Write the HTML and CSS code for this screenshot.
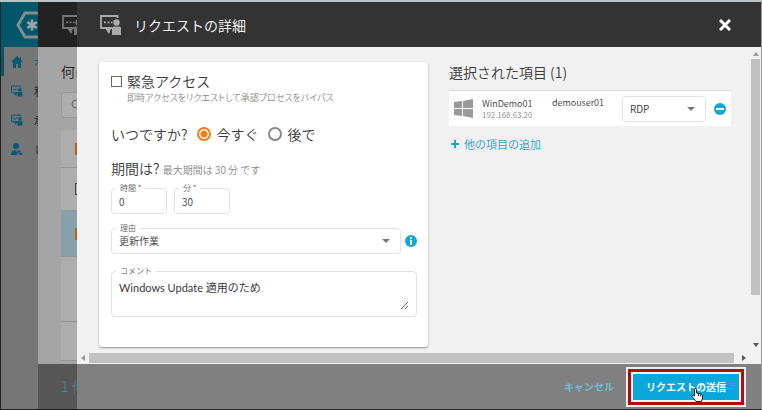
FILE: index.html
```html
<!DOCTYPE html>
<html lang="ja">
	<head>
		<meta charset="utf-8">
		<title>リクエストの詳細</title>
		<link rel="stylesheet" href="styles.css">
	</head>
	<body>
		<!-- アイコン -->
		<svg class="sprite" aria-hidden="true">
			<symbol id="i-request" viewBox="0 0 22 20">
				<path d="M17.500 3V1H1v12h11" fill="none" stroke="currentColor" stroke-width="1.800"/>
				<path d="M5 13h6l-1.500 5.500H8.500z"/>
				<path d="M4 6.500h2v1.800H4zM7.500 6.500h2v1.800h-2zM11 6.500h1.500v1.800H11z"/>
				<circle cx="16.500" cy="7.500" r="3.200"/>
				<path d="M12 13q0-1.500 1.500-1.500h6q1.500 0 1.500 1.500v7h-9z"/>
			</symbol>
			<symbol id="i-approve" viewBox="0 0 22 20">
				<path d="M17.500 3V1H1v12h11M4.500 6l3 3 5-5" fill="none" stroke="currentColor" stroke-width="1.800"/>
				<path d="M5 13h6l-1.500 5.500H8.500z"/>
				<circle cx="16.500" cy="7.500" r="3.200"/>
				<path d="M12 13q0-1.500 1.500-1.500h6q1.500 0 1.500 1.500v7h-9z"/>
			</symbol>
			<symbol id="i-arrow" viewBox="0 0 8 4"><path d="M0 0h8L4 4z"/></symbol>
		</svg>

		<div class="app">
			<!-- サイドバー -->
			<nav class="side">
				<div class="side-logo">
					<svg class="logo" viewBox="0 0 32 28">
						<path d="M9 2h14l7 12-7 12H9L2 14z" fill="none" stroke="#7f8d91" stroke-width="3"/>
						<path d="M16 8.500v11M11.200 11.200l9.600 5.600M20.800 11.200l-9.600 5.600" stroke="#9ba5a8" stroke-width="2.500"/>
					</svg>
				</div>
				<a class="side-item active" href="#">
					<svg viewBox="0 0 12 12"><path d="M6 0 0 6h2v6h3V8h2v4h3V6h2l-2-2V1H9v2z"/></svg>ホ
				</a>
				<a class="side-item" href="#"><svg><use href="#i-request"/></svg>私</a>
				<a class="side-item" href="#"><svg><use href="#i-approve"/></svg>承</a>
				<a class="side-item" href="#">
					<svg viewBox="0 0 12 12"><circle cx="5" cy="3" r="3"/><path d="M0 12q0-5 4-5l2 2 1-2q2 0 3 2-4 0-4 3zM7 11q2-3 5 0-3 2-5 0z"/></svg>レ
				</a>
			</nav>

			<!-- 後ろのパネル -->
			<section class="back">
				<header class="back-head"><svg class="head-icon"><use href="#i-request"/></svg></header>
				<div class="back-body">
					<h2>何に</h2>
					<div class="search">
						<svg viewBox="0 0 12 12"><circle cx="5" cy="5" r="4"/><path d="m8 8 4 4"/></svg>
					</div>
					<ul class="back-list">
						<li class="row-first"><span class="tick on"></span></li>
						<li class="row-second"><span class="tick"></span></li>
						<li class="row-on"><span class="tick on"></span></li>
						<li class="row-tall"></li>
						<li class="row-last"></li>
					</ul>
				</div>
				<footer class="back-foot">1 件</footer>
			</section>

			<!-- リクエストの詳細 -->
			<main class="dialog">
				<header class="dialog-head">
					<svg class="head-icon"><use href="#i-request"/></svg>
					<h1>リクエストの詳細</h1>
					<button class="close" type="button" aria-label="閉じる">
						<svg viewBox="0 0 12 12"><path d="m1 1 10 10M11 1 1 11"/></svg>
					</button>
				</header>

				<div class="scroll">
					<div class="content">
						<form class="card" id="request">
							<div class="emergency">
								<input type="checkbox" id="emergency">
								<label for="emergency">緊急アクセス</label>
								<p>即時アクセスをリクエストして承認プロセスをバイパス</p>
							</div>
							<div class="when">
								<span>いつですか?</span>
								<input type="radio" name="when" id="now" checked><label for="now">今すぐ</label>
								<input type="radio" name="when" id="later"><label for="later">後で</label>
							</div>
							<div class="period">期間は? <small>最大期間は 30 分 です</small></div>
							<div class="line times">
								<div class="field time"><label for="hour">時間 *</label><input type="text" id="hour" value="0"></div>
								<div class="field time"><label for="minute">分 *</label><input type="text" id="minute" value="30"></div>
							</div>
							<div class="line reason">
								<div class="field">
									<label for="reason">理由</label>
									<select id="reason"><option>更新作業</option></select>
									<svg class="arrow"><use href="#i-arrow"/></svg>
								</div>
								<svg class="round" viewBox="0 0 12 12"><circle cx="6" cy="6" r="6"/><path d="M5 2h2v2H5zM5 5h2v5H5z" fill="#fff"/></svg>
							</div>
							<div class="field comment">
								<label for="comment">コメント</label>
								<textarea id="comment">Windows Update 適用のため</textarea>
							</div>
						</form>

						<section class="picked">
							<h2>選択された項目 (1)</h2>
							<div class="item">
								<svg class="win" viewBox="0 0 19 19"><path d="M0 3l8-1v7H0zM9 2l10-2v9H9zM0 10h8v7l-8-1zM9 10h10v9L9 17z"/></svg>
								<div class="host">WinDemo01<small>192.168.63.20</small></div>
								<div class="user">demouser01</div>
								<div class="field protocol">
									<select aria-label="プロトコル"><option>RDP</option></select>
									<svg class="arrow"><use href="#i-arrow"/></svg>
								</div>
								<button class="remove" type="button" aria-label="削除">
									<svg class="round" viewBox="0 0 12 12"><circle cx="6" cy="6" r="6"/><path d="M2 5h8v2H2z" fill="#fff"/></svg>
								</button>
							</div>
							<a class="add" href="#">
								<svg viewBox="0 0 8 8"><path d="M4 0v8M0 4h8"/></svg>他の項目の追加
							</a>
						</section>
					</div>
					<div class="bar-y">
						<svg class="up" viewBox="0 0 6 4"><path d="M3 0l3 4H0z"/></svg>
						<div class="thumb"></div>
						<svg class="down" viewBox="0 0 6 4"><path d="M0 0h6L3 4z"/></svg>
					</div>
					<div class="bar-x">
						<svg class="prev" viewBox="0 0 4 6"><path d="M4 0v6L0 3z"/></svg>
						<div class="thumb"></div>
						<svg class="next" viewBox="0 0 4 6"><path d="M0 0v6l4-3z"/></svg>
					</div>
				</div>

				<footer class="dialog-foot">
					<button class="cancel" type="button">キャンセル</button>
					<div class="mark">
						<button class="send" type="submit" form="request">リクエストの送信</button>
						<svg class="hand" viewBox="0 0 12 14"><path d="M3.500 8V1.500q0-1 1-1t1 1V5l4.500 1q1.500.5 1.500 2v2l-1 3.500H5L1 8.500q0-1.500 1.500-1z" fill="#fff" stroke="#222"/><path d="M7.500 6v2M9.500 6.500v2" stroke="#222"/></svg>
					</div>
				</footer>
			</main>
		</div>
	</body>
</html>
```
FILE: styles.css
```css
* {
	box-sizing: border-box;
}
body,
h1,
h2,
p,
ul {
	margin: 0;
	padding: 0;
}
body {
	font-family: "Noto Sans CJK JP", "Noto Sans", sans-serif;
	font-size: 14px;
	font-weight: 350;
	line-height: 20px;
	color: #3a3a3a;
}
h1,
h2 {
	font-size: 14px;
	font-weight: 350;
}
button,
input,
select,
textarea {
	margin: 0;
	padding: 0;
	border: 0;
	background: none;
	font: inherit;
	color: inherit;
	outline: none;
}
svg {
	display: block;
	flex: none;
	fill: currentColor;
}
.sprite {
	position: absolute;
	width: 0;
	height: 0;
}
.app {
	display: grid;
	grid-template-columns: 38px 39px 1fr;
	min-height: 100vh;
	border-top: 2px solid #b9c4c4;
	border-bottom: 1px solid #222;
	border-right: 1px solid #999;
}
.head-icon {
	width: 22px;
	height: 20px;
}

/* サイドバー */
.side {
	overflow: hidden;
	border-left: 1px solid #222;
	background: #767676;
}
.side-logo {
	display: flex;
	align-items: center;
	height: 45px;
	padding-left: 15px;
	background: #04566b;
}
.logo {
	width: 32px;
	height: 28px;
}
.side-item {
	display: flex;
	align-items: center;
	gap: 11px;
	height: 29px;
	padding-left: 10px;
	font-size: 11px;
	white-space: nowrap;
	text-decoration: none;
	color: #222;
}
.side-item svg {
	width: 12px;
	height: 12px;
	color: #045a70;
}
.side-item.active {
	padding-left: 7px;
	border-left: 3px solid #04566b;
	color: #04566b;
}

/* 後ろのパネル */
.back {
	display: flex;
	flex-direction: column;
	overflow: hidden;
	background: #a5a5a5;
	white-space: nowrap;
}
.back-head {
	display: flex;
	align-items: center;
	height: 45px;
	padding-left: 24px;
	background: #222;
	color: #777;
}
.back-body {
	flex: 1;
	padding: 14px 0 0 23px;
	color: #222;
}
.search {
	display: flex;
	align-items: center;
	width: 200px;
	height: 26px;
	margin: 11px 0 12px;
	padding-left: 9px;
	border: 1px solid #979797;
	border-radius: 3px;
	background: #adadad;
}
.search svg {
	width: 12px;
	height: 12px;
	fill: none;
	stroke: #666;
}
.back-list {
	list-style: none;
	background: #adadad;
}
.back-list li {
	display: flex;
	align-items: center;
	padding-left: 14px;
	border-bottom: 1px solid #969696;
}
.back-list .row-first {
	height: 38px;
}
.back-list .row-second {
	height: 43px;
}
.back-list .row-on {
	height: 46px;
	background: #87a2ab;
}
.back-list .row-tall {
	height: 65px;
}
.back-list .row-last {
	height: 39px;
}
.tick {
	flex: none;
	width: 12px;
	height: 12px;
	border: 1px solid #444;
}
.tick.on {
	border: 0;
	background: #b4601a;
}
.back-foot {
	height: 45px;
	padding-left: 23px;
	line-height: 45px;
	background: #565656;
	color: #477e90;
}

/* ダイアログ */
.dialog {
	display: flex;
	flex-direction: column;
	min-width: 0;
	background: #f1f1f1;
}
.dialog-head {
	display: flex;
	align-items: center;
	height: 45px;
	padding: 0 30px 0 23px;
	background: #333;
	color: #aaa;
}
.dialog-head h1 {
	flex: 1;
	margin-left: 12px;
	color: #fff;
}
.close svg {
	width: 12px;
	height: 12px;
	stroke: #fff;
	stroke-width: 3;
}
.scroll {
	flex: 1;
	display: grid;
	grid-template-columns: 1fr 11px;
	grid-template-rows: 1fr 12px;
}
.content {
	display: grid;
	grid-template-columns: 329fr 282fr;
	align-items: start;
	gap: 21px;
	padding: 15px 19px 5px 22px;
}
.card {
	min-width: 0;
	padding: 9px 11px 30px 12px;
	border-radius: 3px;
	background: #fff;
	box-shadow: 0 1px 2px rgba(0, 0, 0, .4);
}

/* 入力フォーム */
.emergency {
	display: grid;
	grid-template-columns: 11px 1fr;
	column-gap: 5px;
	align-items: center;
}
.emergency p {
	grid-column: 2;
	font-size: 9px;
	line-height: 14px;
	font-feature-settings: "palt";
	color: #888;
}
input[type="checkbox"] {
	appearance: none;
	width: 11px;
	height: 11px;
	border: 1px solid #666;
}
input[type="checkbox"]:checked {
	background: #f07d1a;
}
.when {
	display: flex;
	align-items: center;
	margin-top: 19px;
}
input[type="radio"] {
	appearance: none;
	width: 14px;
	height: 14px;
	margin: 0 6px 0 9px;
	border: 2px solid #888;
	border-radius: 50%;
}
input[type="radio"]:checked {
	border-color: #f07d1a;
	background: radial-gradient(circle, #f07d1a 3px, #fff 4px);
}
.period {
	margin-top: 14px;
}
.period small {
	font-size: 10px;
	color: #888;
}
.line {
	display: flex;
	align-items: center;
}
.times {
	gap: 7px;
	margin-top: 8px;
}
.reason {
	gap: 4px;
	margin: 14px 0 17px;
}
.reason .field {
	flex: 1;
}
.field {
	position: relative;
	height: 26px;
	border: 1px solid #e2e2e2;
	border-radius: 4px;
	background: #fff;
	font-size: 10px;
}
.field label {
	position: absolute;
	top: -6px;
	left: 4px;
	padding: 0 4px;
	font-size: 8px;
	line-height: 10px;
	background: #fff;
	color: #666;
}
.field input,
.field select {
	display: block;
	width: 100%;
	height: 100%;
	padding: 0 7px;
	appearance: none;
}
.time {
	width: 56px;
}
.arrow {
	position: absolute;
	top: 10px;
	right: 10px;
	width: 8px;
	height: 4px;
	color: #777;
	pointer-events: none;
}
.round {
	width: 12px;
	height: 12px;
	color: #12a5d8;
}
.comment {
	height: auto;
	padding: 6px 7px;
}
.comment textarea {
	display: block;
	width: 100%;
	height: 32px;
	font-family: Lato, "Noto Sans CJK JP", sans-serif;
	font-size: 11px;
	font-weight: 400;
	resize: vertical;
}

/* 選択された項目 */
.picked {
	min-width: 0;
}
.item {
	display: flex;
	align-items: center;
	height: 36px;
	margin: 8px 0;
	padding: 0 5px;
	border-top: 1px solid #ddd;
	background: #fff;
	font-size: 9px;
	line-height: 12px;
}
.win {
	width: 19px;
	height: 19px;
	color: #999;
}
.host {
	width: 70px;
	margin-left: 9px;
}
.host small {
	display: block;
	font-size: 8px;
	line-height: 10px;
	color: #888;
}
.user {
	flex: 1;
	align-self: flex-start;
	padding-top: 6px;
}
.protocol {
	width: 84px;
	margin-right: 8px;
}
.add {
	display: flex;
	align-items: center;
	gap: 5px;
	padding-left: 2px;
	font-size: 11px;
	text-decoration: none;
	color: #2a9fcb;
}
.add svg {
	width: 8px;
	height: 8px;
	stroke: currentColor;
	stroke-width: 2;
}

/* スクロールバー */
.bar-y,
.bar-x {
	display: flex;
	align-items: center;
	justify-content: space-between;
	color: #555;
}
.bar-y {
	flex-direction: column;
	padding: 5px 1px;
}
.bar-x {
	padding: 1px 4px;
}
.thumb {
	background: #c1c1c1;
}
.bar-y .thumb {
	width: 9px;
	height: 80%;
	margin: 3px 0 auto;
}
.bar-x .thumb {
	width: 97%;
	height: 10px;
	margin: 0 auto 0 4px;
}
.up,
.down {
	width: 6px;
	height: 4px;
}
.prev,
.next {
	width: 4px;
	height: 6px;
}
.up,
.prev {
	color: #999;
}

/* フッター */
.dialog-foot {
	display: flex;
	align-items: center;
	justify-content: flex-end;
	gap: 14px;
	height: 45px;
	padding-right: 17px;
	background: #808080;
	font-size: 10px;
	font-weight: 700;
}
.cancel {
	color: #6fbdd3;
}
.mark {
	position: relative;
	padding: 2px;
	border: 3px solid #b40a0f;
	outline: 2px solid #eee;
	background: #f6f6f6;
}
.send {
	display: block;
	height: 26px;
	padding: 0 13px;
	background: #0ba7da;
	color: #fff;
}
.hand {
	position: absolute;
	top: 16px;
	left: 60px;
	width: 12px;
	height: 14px;
}
```
